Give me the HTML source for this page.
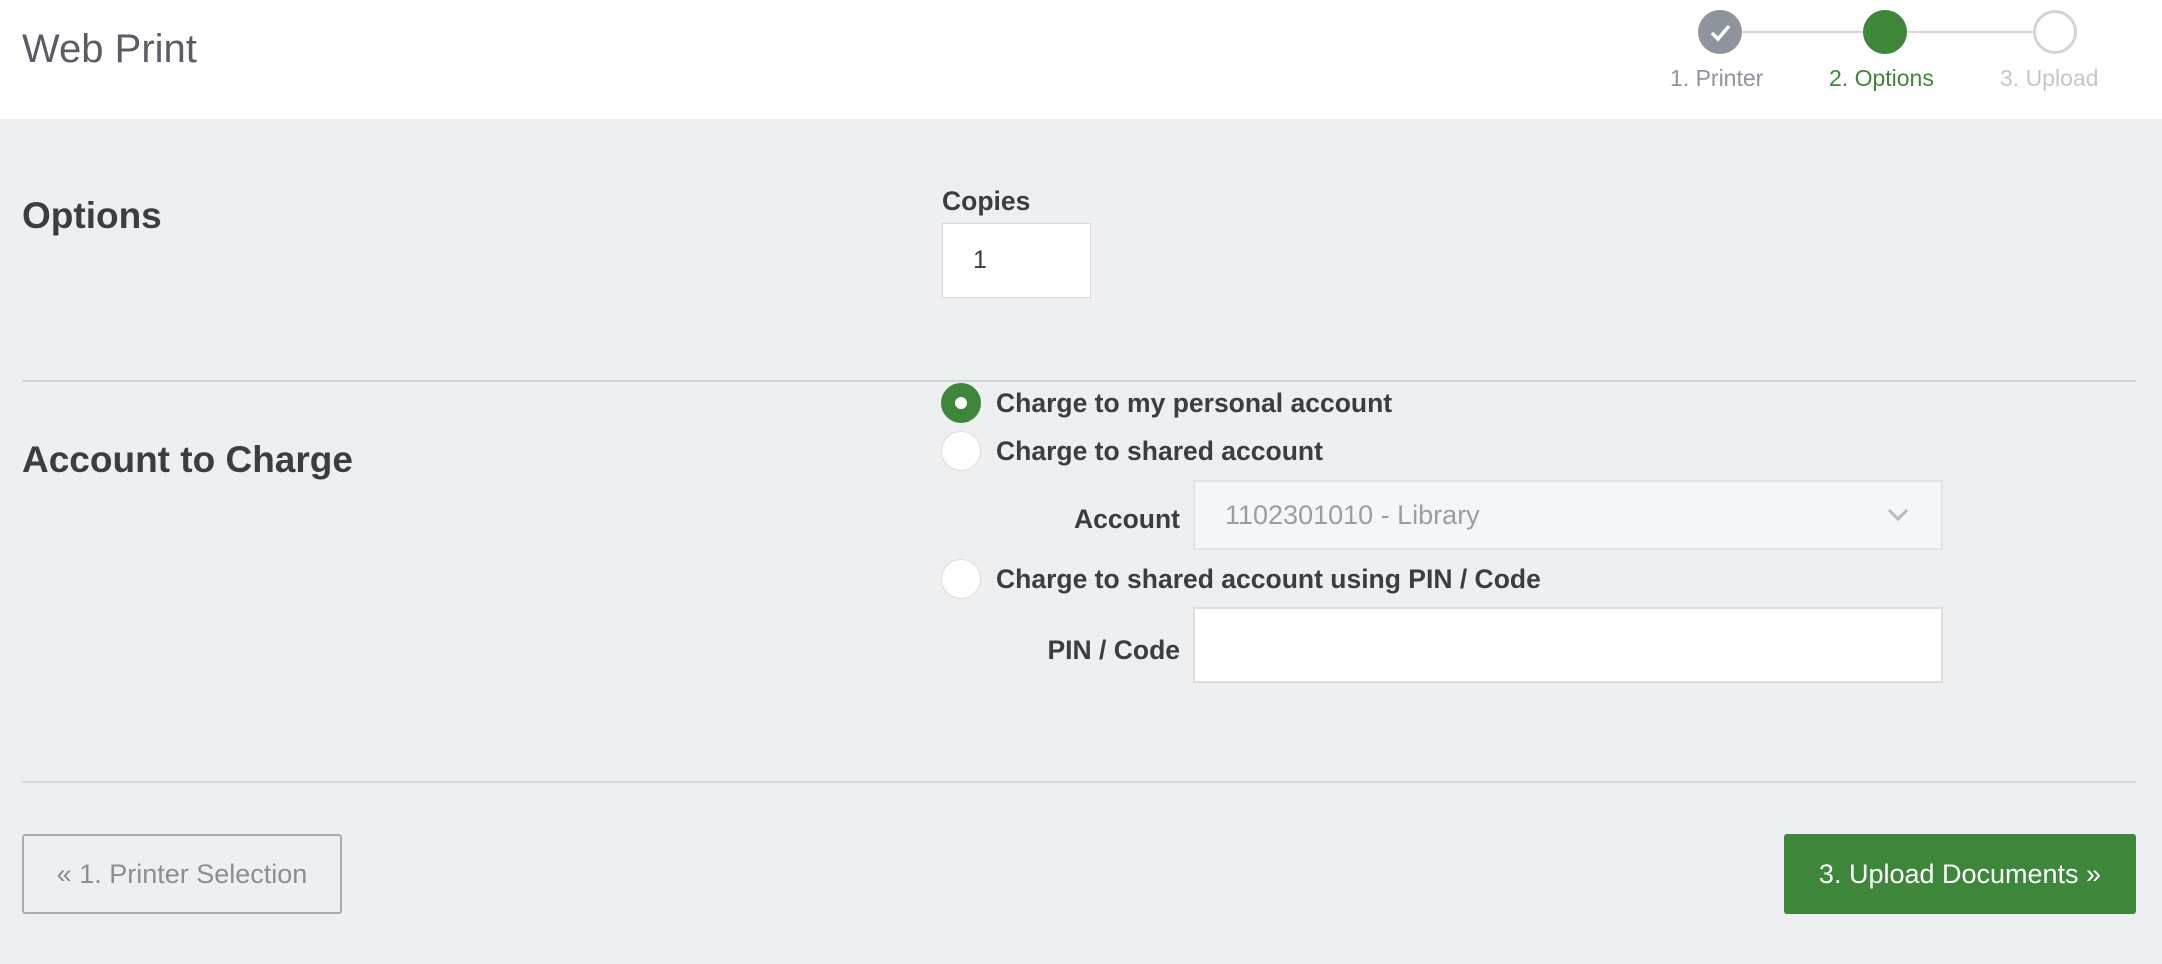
<!DOCTYPE html>
<html><head><style>
*{box-sizing:border-box;margin:0;padding:0}
body{width:2162px;height:964px;background:#eeeff1;font-family:"Liberation Sans",sans-serif;color:#3a3d42;position:relative;overflow:hidden}
.a{position:absolute;white-space:nowrap}
.hdr{position:absolute;left:0;top:0;width:2162px;height:119px;background:#fff}
.b{font-weight:bold}
.circ{position:absolute;width:44px;height:44px;border-radius:50%}
.radio{position:absolute;width:40px;height:40px;border-radius:50%;background:#fff;border:1px solid #dcdde0}
.lbl{font-size:26.5px;font-weight:bold;line-height:30px}
</style></head><body>
<div class="hdr"></div>
<div class="a" style="left:22px;top:27px;font-size:40px;color:#5a5d66">Web Print</div>
<div class="a" style="left:1720px;top:31px;width:335px;height:2px;background:#d6d7da"></div>
<div class="circ" style="left:1698px;top:10px;background:#8e949c"><svg width="44" height="44"><path d="M14 23 L20 29 L31 16" stroke="#fff" stroke-width="3.5" fill="none"/></svg></div>
<div class="circ" style="left:1863px;top:10px;background:#3e873a"></div>
<div class="circ" style="left:2033px;top:10px;background:#fff;border:3px solid #d3d4d7"></div>
<div class="a" style="left:1670px;top:65px;font-size:23px;color:#8e949c">1. Printer</div>
<div class="a" style="left:1829px;top:65px;font-size:23px;color:#3e873a">2. Options</div>
<div class="a" style="left:2000px;top:65px;font-size:23px;color:#c4c6ca">3. Upload</div>

<div class="a b" style="left:22px;top:195px;font-size:37px">Options</div>
<div class="a lbl" style="left:942px;top:186px">Copies</div>
<div class="a" style="left:942px;top:223px;width:149px;height:75px;background:#fff;border:1px solid #d6d7da;font-size:25px;padding:22px 0 0 30px">1</div>
<div class="a" style="left:22px;top:380px;width:2114px;height:2px;background:#d3d4d7"></div>

<div class="a b" style="left:22px;top:439px;font-size:37px">Account to Charge</div>
<div class="radio" style="left:941px;top:383px;background:#3e873a;border-color:#3e873a"><div style="position:absolute;left:13px;top:13px;width:12px;height:12px;border-radius:50%;background:#fff"></div></div>
<div class="a lbl" style="left:996px;top:388px">Charge to my personal account</div>
<div class="radio" style="left:941px;top:431px"></div>
<div class="a lbl" style="left:996px;top:436px">Charge to shared account</div>
<div class="a lbl" style="left:980px;top:504px;width:200px;text-align:right">Account</div>
<div class="a" style="left:1193px;top:480px;width:750px;height:70px;background:#f5f6f8;border:2px solid #e2e3e6;font-size:27px;color:#9a9da3;padding:18px 0 0 30px">1102301010 - Library</div>
<svg class="a" style="left:1886px;top:505px" width="24" height="20"><path d="M3 5 L12 14 L21 5" stroke="#b8bbc0" stroke-width="3" fill="none"/></svg>
<div class="radio" style="left:941px;top:559px"></div>
<div class="a lbl" style="left:996px;top:564px">Charge to shared account using PIN / Code</div>
<div class="a lbl" style="left:960px;top:635px;width:220px;text-align:right">PIN / Code</div>
<div class="a" style="left:1193px;top:607px;width:750px;height:76px;background:#fff;border:2px solid #dcdde0"></div>
<div class="a" style="left:22px;top:781px;width:2114px;height:2px;background:#d3d4d7"></div>

<div class="a" style="left:22px;top:834px;width:320px;height:80px;border:2px solid #a9adb2;border-radius:3px;font-size:27px;color:#8a8f96;text-align:center;line-height:76px">« 1. Printer Selection</div>
<div class="a" style="left:1784px;top:834px;width:352px;height:80px;background:#3e873a;border-radius:3px;font-size:27px;color:#fff;text-align:center;line-height:80px">3. Upload Documents »</div>
</body></html>
